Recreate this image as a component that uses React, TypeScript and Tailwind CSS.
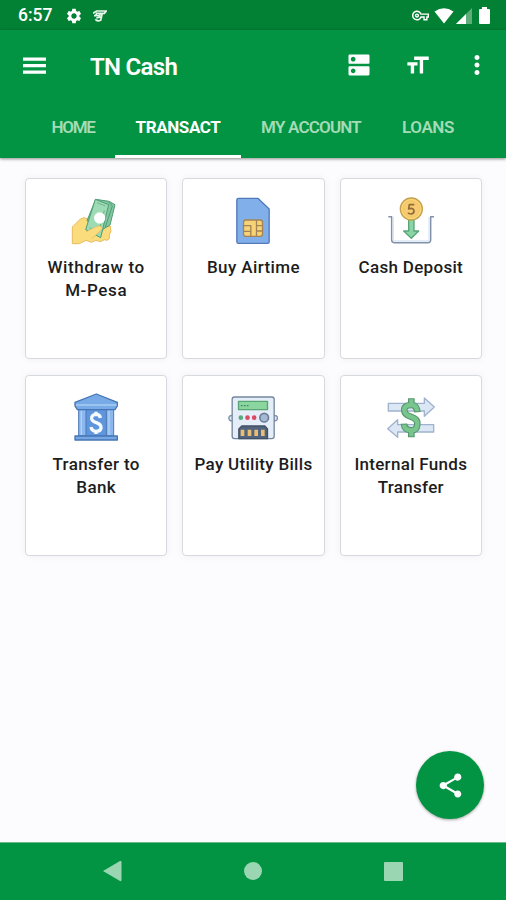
import type { ReactNode } from "react";
import {
  MdDns,
  MdFormatSize,
  MdMoreVert,
  MdOutlineVpnKey,
  MdSettings,
  MdShare,
} from "react-icons/md";

type Tab = { label: string; width: string; active?: boolean };

type Service = { title: string[]; tracking: string; icon: ReactNode };

const tabs: Tab[] = [
  { label: "HOME", width: "w-[84px] tracking-[-1.3px]" },
  { label: "TRANSACT", width: "w-[126px] tracking-[-0.4px]", active: true },
  { label: "MY ACCOUNT", width: "w-[140px] tracking-[-0.8px]" },
  { label: "LOANS", width: "w-[94px] tracking-[-0.4px]" },
];

const WithdrawIcon = () => (
  <svg viewBox="34 15 150 150" className="h-[50px] w-[50px]" strokeLinejoin="round">
    <path d="M38 111 L62 87 Q73 79 83 87 L108 108 L118 140 L136 112 L152 108 Q157 124 149 135 V146 Q143 154 134 149 L122 155 L108 151 L96 157 L79 151 L59 161 H38z" fill="#fbdc7d" stroke="#e8bc61" strokeWidth="3" />
    <path d="M108 28 L148 34 L166 44 L151 105 L122 122 L82 92z" fill="#83c7a0" stroke="#4d9d75" strokeWidth="3" />
    <path d="M147 36 L158 48 L137 111" fill="none" stroke="#4d9d75" strokeWidth="3" />
    <path d="M107 28 L147 44 L123 143 L78 119z" fill="#9ddbb5" stroke="#4d9d75" strokeWidth="3" />
    <path d="M112 38 L137 48 M89 113 L114 127 M134 61 L117 126" fill="none" stroke="#70b58e" strokeWidth="3" />
    <circle cx="120" cy="84" r="17" fill="#fff" />
    <path d="M79 126 L108 110 Q121 105 127 111 Q130 117 122 123 L96 146 L80 148z" fill="#fbdc7d" />
    <path d="M79 126 L108 110 Q121 105 127 111 Q130 117 122 123 L96 146" fill="none" stroke="#d9b65e" strokeWidth="2" />
  </svg>
);

const SimIcon = () => (
  <svg viewBox="25.5 15 150 150" className="h-[50px] w-[50px]" strokeLinejoin="round">
    <path d="M57 25 H115 L149 57 V156 Q149 160 145 160 H57 Q52 160 52 155 V30 Q52 25 57 25z" fill="#80afe9" stroke="#5379b8" strokeWidth="4" />
    <rect x="72" y="90" width="57" height="49" rx="7" fill="#f8d376" stroke="#a38454" strokeWidth="4" />
    <path d="M73 107 H94 V124 H73 M94 124 V139 M91 107 V105 M111 90 V139 M111 107 H129 M111 123 H129" fill="none" stroke="#a38454" strokeWidth="4" />
  </svg>
);

const DepositIcon = () => (
  <svg viewBox="33 15 150 150" className="h-[50px] w-[50px]" strokeLinejoin="round">
    <path d="M40 80 H50 V149 Q50 158 59 158 H158 Q167 158 167 149 V80 H177" fill="none" stroke="#8191aa" strokeWidth="4.5" />
    <path d="M55 81 V150 Q55 153 60 153 H157 Q162 153 162 149 V81" fill="none" stroke="#dce6f3" strokeWidth="4" />
    <path d="M101 87 H117 V123 H131 L109 145 L86 123 H101z" fill="#8bd4a3" stroke="#58a47a" strokeWidth="4" />
    <circle cx="109" cy="57" r="33" fill="#fad675" stroke="#c5a04f" strokeWidth="4" />
    <circle cx="109" cy="57" r="25" fill="#f7cb72" stroke="#eebb63" strokeWidth="2" />
    <path d="M118 44 H103 L101 57 Q115 52 117 62 Q117 71 108 72 Q101 72 99 68" fill="none" stroke="#8e6b37" strokeWidth="5" />
  </svg>
);

const BankIcon = () => (
  <svg viewBox="34 21 150 150" className="h-[50px] w-[50px]" strokeLinejoin="round">
    <path d="M64 73 H154 V153 H64z" fill="#5e95dc" />
    <path d="M57 73 H79 V153 H57z M140 73 H162 V153 H140z" fill="#8ab7ee" stroke="#4d78b6" strokeWidth="3" />
    <path d="M65 78 V150 M148 78 V150" stroke="#b1d1f6" strokeWidth="4" />
    <path d="M110 27 L173 52 V63 L166 74 H53 L46 63 V52z" fill="#79aae8" stroke="#4575b3" strokeWidth="4" />
    <path d="M49 60 H171" stroke="#a9ccf5" strokeWidth="4" />
    <path d="M46 153 H173 V165 H46z" fill="#75a7e4" stroke="#4575b3" strokeWidth="4" />
    <path d="M122 99 Q121 88 109 88 Q95 89 96 101 Q97 109 110 113 Q125 118 124 129 Q123 139 109 139 Q96 138 94 126 M109 80 V89 M109 138 V147" fill="none" stroke="#f6fbff" strokeWidth="10" />
  </svg>
);

const MeterIcon = () => (
  <svg viewBox="25.5 21 150 150" className="h-[50px] w-[50px]" strokeLinejoin="round">
    <path d="M39 91 Q28 91 28 99 Q28 108 39 108 M163 91 Q174 91 174 99 Q174 108 163 108" fill="#dce7f4" stroke="#7990aa" strokeWidth="4" />
    <rect x="38" y="36" width="126" height="125" rx="7" fill="#e5eef8" stroke="#74869f" strokeWidth="4" />
    <path d="M57 49 H144 V74 H57z" fill="#8ad69e" stroke="#58a475" strokeWidth="4" />
    <path d="M64 62 H90" stroke="#43845d" strokeWidth="4" strokeDasharray="5 4" />
    <circle cx="64" cy="98" r="7" fill="#58a881" />
    <circle cx="84" cy="98" r="7" fill="#d94b64" />
    <circle cx="104" cy="98" r="7" fill="#d94b64" />
    <circle cx="134" cy="98" r="13" fill="#a7b9d1" stroke="#697f9c" strokeWidth="5" />
    <path d="M58 161 V132 L67 123 H136 L144 132 V161z" fill="#52647d" stroke="#425066" strokeWidth="4" />
    <path d="M69 134 V153 M90 134 V153 M110 134 V153 M130 134 V153" stroke="#e9bd72" strokeWidth="11" />
  </svg>
);

const TransferIcon = () => (
  <svg viewBox="33 21 150 150" className="h-[50px] w-[50px]" strokeLinejoin="round">
    <path d="M40 55 H148 V39 L178 66 L148 94 V78 H40z" fill="#dce7f5" stroke="#a0b2ce" strokeWidth="4" />
    <path d="M176 119 H68 V104 L38 131 L68 157 V141 H176z" fill="#dce7f5" stroke="#a0b2ce" strokeWidth="4" />
    <path d="M127 82 Q125 59 108 60 Q86 61 88 77 Q89 89 107 95 Q129 102 127 118 Q126 137 107 136 Q88 134 87 116 M109 40 V60 M109 136 V157" fill="none" stroke="#55986e" strokeWidth="20" />
    <path d="M127 79 Q125 59 108 60 Q86 61 88 77 Q89 89 107 95 Q129 102 127 118 Q126 137 107 136 Q88 134 87 119 M109 43 V60 M109 136 V154" fill="none" stroke="#78c58d" strokeWidth="13" />
  </svg>
);

const services: Service[] = [
  { title: ["Withdraw to", "M-Pesa"], tracking: "tracking-[0.6px]", icon: <WithdrawIcon /> },
  { title: ["Buy Airtime"], tracking: "tracking-[0.4px]", icon: <SimIcon /> },
  { title: ["Cash Deposit"], tracking: "tracking-[0.3px]", icon: <DepositIcon /> },
  { title: ["Transfer to", "Bank"], tracking: "tracking-[0.4px]", icon: <BankIcon /> },
  { title: ["Pay Utility Bills"], tracking: "tracking-[0.3px]", icon: <MeterIcon /> },
  { title: ["Internal Funds", "Transfer"], tracking: "tracking-[0.3px]", icon: <TransferIcon /> },
];

const StatusBar = () => (
  <div className="flex h-[30px] items-center bg-[#028034] pt-px pl-[18px] pr-[16px] text-white">
    <span className="w-[47px] text-[17.5px] font-medium">6:57</span>
    <MdSettings className="h-[18px] w-[18px]" />
    <svg viewBox="0 0 42 36" className="ml-[10px] h-3 w-[14px]" fill="none" stroke="#eaf7ed" strokeWidth="5">
      <path d="M0 10 L11 3 H40 L34 10 H28 L23 31 Q12 35 7 28 M3 17 H20 L23 10 H11 L7 18 M10 24 L28 20" />
    </svg>
    <div className="ml-auto flex items-center">
      <MdOutlineVpnKey className="h-[17px] w-[17px]" />
      <svg viewBox="0 0 20 16" className="ml-[5px] h-4 w-5" fill="#fff">
        <path d="M0.5 3.5 Q10-3 19.5 3.5 L10 15.5z" />
      </svg>
      <svg viewBox="0 0 16 16" className="ml-[2px] h-4 w-4">
        <path d="M0 16 L16 0 V16z" fill="#5eae7c" />
        <path d="M0 16 L10 6 V16z" fill="#fff" />
      </svg>
      <svg viewBox="0 0 11 17" className="ml-[7px] h-[17px] w-[11px]" fill="#fff">
        <path d="M3 0 H8 V2 H10 Q11 2 11 3 V16 Q11 17 10 17 H1 Q0 17 0 16 V3 Q0 2 1 2 H3z" />
      </svg>
    </div>
  </div>
);

const Header = () => (
  <header className="relative z-10 h-32 bg-[#029442] text-white shadow-[0_1px_3px_rgba(0,0,0,0.45)]">
    <div className="flex h-[70px] items-center pl-[23px]">
      <svg viewBox="0 0 23 17" className="h-[17px] w-[23px]" fill="currentColor">
        <path d="M0 0.5 H23 V3.7 H0z M0 7 H23 V10.2 H0z M0 13.5 H23 V16.7 H0z" />
      </svg>
      <h1 className="ml-[44px] mt-[3px] text-[24px] font-semibold tracking-[-0.7px]">TN Cash</h1>
      <div className="ml-auto flex items-center pr-[14px]">
        <MdDns className="h-7 w-7" />
        <MdFormatSize className="ml-[31px] h-[27px] w-[27px]" />
        <MdMoreVert className="ml-[31px] h-[30px] w-[30px]" />
      </div>
    </div>
    <nav className="flex h-[58px] pl-[31px]">
      {tabs.map((tab) => (
        <button
          key={tab.label}
          className={`flex shrink-0 items-center justify-center border-b-[3px] pt-px text-[17px] whitespace-nowrap ${tab.width} ${
            tab.active ? "border-white font-bold text-white" : "border-transparent font-semibold text-[#a5dbb7]"
          }`}
        >
          {tab.label}
        </button>
      ))}
    </nav>
  </header>
);

const ServiceCard = ({ title, tracking, icon }: Service) => (
  <button className="flex h-[181px] flex-col items-center rounded-[4px] border-[1.5px] border-[#d6d9de] bg-white pt-4 shadow-[0_0_8px_rgba(30,40,70,0.05)]">
    {icon}
    <span className={`mt-[11px] text-[17px] leading-[22.5px] font-medium whitespace-nowrap text-[#1d1d1d] ${tracking}`}>
      {title.map((line) => (
        <span key={line} className="block">{line}</span>
      ))}
    </span>
  </button>
);

const NavigationBar = () => (
  <footer className="flex h-[58px] items-center justify-between border-t border-[#6cb98b] bg-[#029442] pr-[103px] pb-px pl-[103px] text-[#9ad6b2]">
    <svg viewBox="0 0 19 22" className="h-[22px] w-[19px]" fill="currentColor">
      <path d="M0 11 L17 1 Q18.5 0.5 18.5 2 V20 Q18.5 21.5 17 21z" />
    </svg>
    <span className="h-[18px] w-[18px] rounded-full bg-current" />
    <span className="h-[19px] w-[19px] rounded-[1px] bg-current" />
  </footer>
);

const App = () => {
  return (
    <div className="relative flex h-[900px] w-[506px] flex-col overflow-hidden bg-[#fcfcfe] font-[Roboto,sans-serif]">
      <StatusBar />
      <Header />
      <main className="flex-1 pt-5 pr-6 pl-[25px]">
        <div className="grid grid-cols-3 gap-x-[15px] gap-y-4">
          {services.map((service) => (
            <ServiceCard key={service.title[0]} {...service} />
          ))}
        </div>
      </main>
      <button className="absolute right-[22px] bottom-[81px] flex h-[68px] w-[68px] items-center justify-center rounded-full bg-[#029442] text-white shadow-[0_1px_3px_rgba(0,0,0,0.35)]">
        <MdShare className="h-[29px] w-[29px]" />
      </button>
      <NavigationBar />
    </div>
  );
};

export default App;
